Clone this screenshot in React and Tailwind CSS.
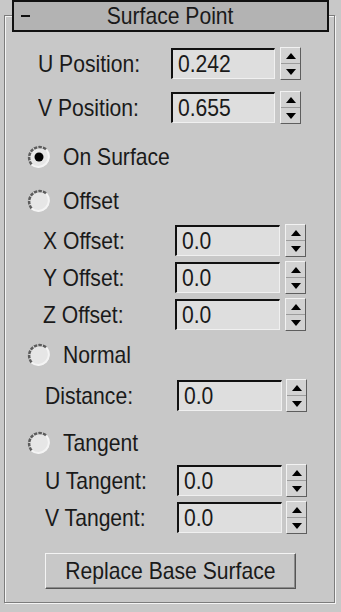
import React from 'react';

function Spinner() {
  return (
    <div className="flex h-[33px] w-[21px] flex-col border border-t-[#f2f2f2] border-l-[#f2f2f2] border-r-[#5e5e5e] border-b-[#5e5e5e] bg-[#d2d2d2]">
      <div className="flex flex-1 items-center justify-center border-b border-b-[#9c9c9c]">
        <svg width="10" height="6" viewBox="0 0 10 6">
          <path d="M5 0 L10 6 L0 6 Z" fill="#000" />
        </svg>
      </div>
      <div className="flex flex-1 items-center justify-center">
        <svg width="10" height="6" viewBox="0 0 10 6">
          <path d="M0 0 L10 0 L5 6 Z" fill="#000" />
        </svg>
      </div>
    </div>
  );
}

function Field({ label, value, rowClass, labelClass, boxClass, gapClass }) {
  return (
    <div className={`flex h-[33px] items-center ${rowClass}`}>
      <div className={`shrink-0 ${labelClass}`}>
        <span className="inline-block origin-left scale-x-[0.88] whitespace-nowrap">{label}</span>
      </div>
      <div
        className={`flex h-[31px] shrink-0 items-center border-t-2 border-l-2 border-r border-b border-t-[#111] border-l-[#111] border-r-[#f0f0f0] border-b-[#f0f0f0] bg-[#dedede] pl-[5px] ${boxClass}`}
      >
        <span className="inline-block origin-left scale-x-[0.88]">{value}</span>
      </div>
      <div className={gapClass}>
        <Spinner />
      </div>
    </div>
  );
}

function Radio({ label, checked, className }) {
  return (
    <div className={`ml-[22px] flex h-[24px] items-center gap-[12px] ${className}`}>
      <svg width="24" height="24" viewBox="0 0 24 24">
        <circle cx="12" cy="12" r="10.5" fill="#e6e6e6" />
        <path d="M4.6 19.4 A10.5 10.5 0 0 1 19.4 4.6" fill="none" stroke="#5c5c5c" strokeWidth="2.5" strokeDasharray="3.5 1" />
        <path d="M19.4 4.6 A10.5 10.5 0 0 1 4.6 19.4" fill="none" stroke="#f4f4f4" strokeWidth="2" />
        {checked && <circle cx="12" cy="12" r="4.5" fill="#000" />}
      </svg>
      <span className="inline-block origin-left scale-x-[0.88] whitespace-nowrap">{label}</span>
    </div>
  );
}

export default function App() {
  const posRow = 'ml-[33px]';
  const posLabel = 'w-[133px]';
  const posBox = 'w-[104px]';
  const offRow = 'ml-[38px]';
  const offLabel = 'w-[132px]';
  const offBox = 'w-[105px]';
  const tanRow = 'ml-[40px]';

  return (
    <div className="h-[612px] w-[341px] overflow-hidden bg-[#c8c8c8] font-['Liberation_Sans',Arial,sans-serif] text-[24px] leading-none text-[#1a1a1a]">
      {/* Rollout title */}
      <div className="relative z-10 ml-[12px] flex h-[32px] w-[317px] items-center border-2 border-[#111] bg-[#b3b3b3] px-[7px]">
        <div className="h-[2px] w-[9px] bg-[#111]" />
        <div className="flex-1 text-center">
          <span className="inline-block scale-x-[0.88]">Surface Point</span>
        </div>
        <div className="w-[9px]" />
      </div>

      {/* Rollout body */}
      <div className="-mt-[17px] ml-[4px] flex w-[331px] flex-col border border-[#7c7c7c] pt-[31px] pb-[13px] shadow-[inset_1px_1px_0_#f4f4f4,1px_1px_0_#f4f4f4]">
        <Field label="U Position:" value="0.242" rowClass={posRow} labelClass={posLabel} boxClass={posBox} gapClass="ml-[5px]" />
        <Field label="V Position:" value="0.655" rowClass={`${posRow} mt-[11px]`} labelClass={posLabel} boxClass={posBox} gapClass="ml-[5px]" />

        <Radio label="On Surface" checked className="mt-[21px]" />
        <Radio label="Offset" className="mt-[20px]" />

        <Field label="X Offset:" value="0.0" rowClass={`${offRow} mt-[11px]`} labelClass={offLabel} boxClass={offBox} gapClass="ml-[5px]" />
        <Field label="Y Offset:" value="0.0" rowClass={`${offRow} mt-[4px]`} labelClass={offLabel} boxClass={offBox} gapClass="ml-[5px]" />
        <Field label="Z Offset:" value="0.0" rowClass={`${offRow} mt-[4px]`} labelClass={offLabel} boxClass={offBox} gapClass="ml-[5px]" />

        <Radio label="Normal" className="mt-[12px]" />
        <Field label="Distance:" value="0.0" rowClass={`${tanRow} mt-[12px]`} labelClass={offLabel} boxClass={offBox} gapClass="ml-[4px]" />

        <Radio label="Tangent" className="mt-[19px]" />
        <Field label="U Tangent:" value="0.0" rowClass={`${tanRow} mt-[9px]`} labelClass={offLabel} boxClass={offBox} gapClass="ml-[4px]" />
        <Field label="V Tangent:" value="0.0" rowClass={`${tanRow} mt-[4px]`} labelClass={offLabel} boxClass={offBox} gapClass="ml-[4px]" />

        <button className="mt-[19px] ml-[40px] flex h-[36px] w-[251px] items-center justify-center border border-t-[#f4f4f4] border-l-[#f4f4f4] border-r-[#555] border-b-[#555] bg-[#c8c8c8] shadow-[inset_-1px_-1px_0_#8c8c8c]">
          <span className="inline-block scale-x-[0.88] whitespace-nowrap">Replace Base Surface</span>
        </button>
      </div>
    </div>
  );
}
